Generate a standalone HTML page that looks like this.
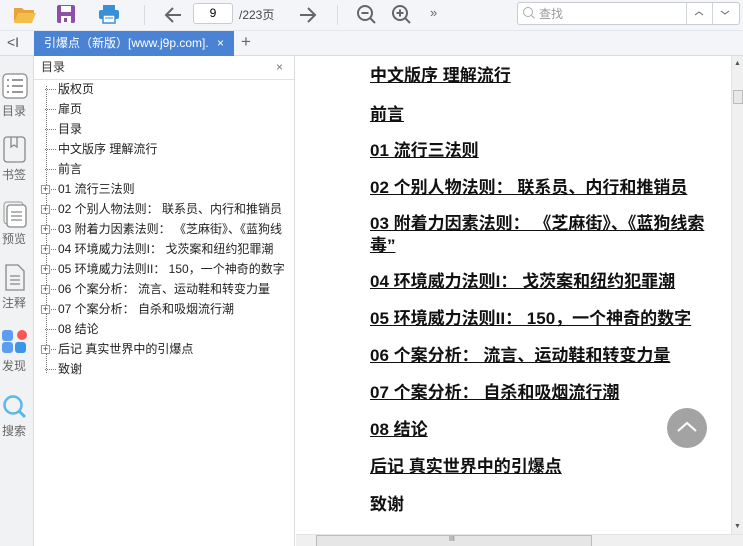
<!DOCTYPE html>
<html><head><meta charset="utf-8"><style>
*{margin:0;padding:0;box-sizing:border-box}
body{width:743px;height:546px;overflow:hidden;position:relative;background:#fff;font-family:"Liberation Sans","Noto Sans CJK SC",sans-serif;}
.a{position:absolute}
#tb{left:0;top:0;width:743px;height:31px;background:#f3f5f8;border-bottom:1px solid #e3e6ea}
#tabs{left:0;top:31px;width:743px;height:25px;background:#f3f5f8;border-bottom:1px solid #d8dbe0}
#strip{left:0;top:56px;width:34px;height:490px;background:#f0f2f4;border-right:1px solid #d8dbe0}
#toc{left:34px;top:56px;width:261px;height:490px;background:#fff;border-right:1px solid #d8dbe0}
.ti{position:absolute;left:24px;font-size:12px;color:#222;white-space:nowrap;line-height:14px}
.ti:before{content:"";position:absolute;left:-13px;top:7px;width:11px;border-top:1px dotted #777}
.pl{position:absolute;left:7px;width:9px;height:9px;border:1px solid #999;background:#fff;font-size:9px;line-height:7px;text-align:center;color:#333}
.h{position:absolute;left:370px;font-size:17px;font-weight:bold;color:#111;text-decoration:underline;white-space:nowrap;line-height:22px}
.lbl{position:absolute;left:0;width:28px;text-align:center;font-size:12px;color:#666}
</style></head><body>
<div id="tb" class="a">
<svg class="a" style="left:13px;top:4px" width="24" height="20"><path d="M1 4h8l2 2h10v3H6L1 18z" fill="#e8a43a"/><path d="M5 9h18l-4 10H1z" fill="#f5bd4c"/></svg>
<svg class="a" style="left:56px;top:4px" width="20" height="20"><rect x="1" y="1" width="18" height="18" rx="2" fill="#8e4fa8"/><rect x="5" y="2" width="10" height="6" fill="#fff"/><rect x="5" y="12" width="10" height="7" fill="#fff"/><rect x="8" y="14" width="3" height="4" fill="#8e4fa8"/></svg>
<svg class="a" style="left:98px;top:4px" width="22" height="20"><rect x="5" y="1" width="12" height="5" fill="#3b8ed8"/><rect x="1" y="6" width="20" height="9" rx="2" fill="#3b8ed8"/><rect x="5" y="11" width="12" height="8" fill="#fff" stroke="#3b8ed8" stroke-width="1.5"/><line x1="7" y1="14" x2="15" y2="14" stroke="#3b8ed8"/></svg>
<div class="a" style="left:144px;top:5px;width:1px;height:20px;background:#d8dbe0"></div>
<svg class="a" style="left:163px;top:5px" width="20" height="20"><path d="M18 10H3M10 3L3 10l7 7" fill="none" stroke="#666" stroke-width="2"/></svg>
<div class="a" style="left:193px;top:3px;width:40px;height:21px;border:1px solid #c8ccd2;border-radius:3px;background:#fff;font-size:12px;text-align:center;line-height:19px">9</div>
<div class="a" style="left:239px;top:6px;font-size:12px;color:#444">/223页</div>
<svg class="a" style="left:298px;top:5px" width="20" height="20"><path d="M2 10h15M10 3l7 7-7 7" fill="none" stroke="#666" stroke-width="2"/></svg>
<div class="a" style="left:337px;top:5px;width:1px;height:20px;background:#d8dbe0"></div>
<svg class="a" style="left:356px;top:4px" width="22" height="22"><circle cx="9" cy="9" r="7" fill="none" stroke="#666" stroke-width="2"/><path d="M14 14l5 5M5.5 9h7" stroke="#666" stroke-width="2"/></svg>
<svg class="a" style="left:391px;top:4px" width="22" height="22"><circle cx="9" cy="9" r="7" fill="none" stroke="#666" stroke-width="2"/><path d="M14 14l5 5M5.5 9h7M9 5.5v7" stroke="#666" stroke-width="2"/></svg>
<div class="a" style="left:430px;top:5px;font-size:13px;color:#666">»</div>
<div class="a" style="left:517px;top:2px;width:223px;height:23px;border:1px solid #c8ccd2;border-radius:3px;background:#fff"></div>
<svg class="a" style="left:522px;top:6px" width="14" height="14"><circle cx="6" cy="6" r="4.5" fill="none" stroke="#aaa"/><path d="M9.5 9.5l3 3" stroke="#aaa"/></svg>
<div class="a" style="left:539px;top:5px;font-size:12px;color:#999">查找</div>
<div class="a" style="left:686px;top:3px;width:1px;height:21px;background:#d0d3d8"></div>
<div class="a" style="left:712px;top:3px;width:1px;height:21px;background:#d0d3d8"></div>
<svg class="a" style="left:694px;top:9px" width="10" height="8"><path d="M1 6l4-3 4 3" fill="none" stroke="#666"/></svg>
<svg class="a" style="left:720px;top:9px" width="10" height="8"><path d="M1 2l4 3 4-3" fill="none" stroke="#666"/></svg>
</div>
<div id="tabs" class="a">
<div class="a" style="left:7px;top:3px;font-size:14px;color:#555">&lt;I</div>
<div class="a" style="left:34px;top:0;width:200px;height:25px;background:#4a82d4;color:#fff;font-size:12px;line-height:25px;padding-left:10px;white-space:nowrap;overflow:hidden">引爆点（新版）[www.j9p.com].<span style="position:absolute;left:183px">×</span></div>
<div class="a" style="left:241px;top:1px;font-size:17px;color:#666">+</div>
</div>
<div id="strip" class="a">
<div class="a" style="left:0;top:15px;width:31px;height:30px;"></div>
<svg class="a" style="left:2px;top:17px" width="26" height="26"><rect x="1" y="1" width="24" height="24" rx="4" fill="#fff" stroke="#888" stroke-width="1.2"/><path d="M5 7h2M10 7h11M5 13h2M10 13h11M5 19h2M10 19h11" stroke="#777" stroke-width="1.6"/></svg>
<div class="lbl" style="top:46px">目录</div>
<svg class="a" style="left:3px;top:80px" width="24" height="28"><rect x="1" y="1" width="21" height="25" rx="3" fill="none" stroke="#888" stroke-width="1.3"/><path d="M8 1v10l3-2 3 2V1" fill="none" stroke="#888" stroke-width="1.3"/></svg>
<div class="lbl" style="top:110px">书签</div>
<svg class="a" style="left:3px;top:145px" width="25" height="27"><rect x="1" y="1" width="19" height="22" rx="3" fill="none" stroke="#999"/><rect x="4" y="4" width="19" height="22" rx="3" fill="#fff" stroke="#888" stroke-width="1.3"/><path d="M8 11h11M8 15h11M8 19h11" stroke="#888" stroke-width="1.3"/></svg>
<div class="lbl" style="top:174px">预览</div>
<svg class="a" style="left:4px;top:208px" width="22" height="28"><path d="M2 1h12l6 6v19H2z" fill="none" stroke="#888" stroke-width="1.3"/><path d="M6 12h10M6 16h10M6 20h10" stroke="#888" stroke-width="1.3"/></svg>
<div class="lbl" style="top:238px">注释</div>
<svg class="a" style="left:2px;top:273px" width="26" height="26"><rect x="0" y="1" width="11" height="11" rx="3" fill="#5b9ef0"/><circle cx="20" cy="6" r="5" fill="#f55"/><rect x="0" y="13" width="11" height="11" rx="3" fill="#5b9ef0"/><rect x="13" y="13" width="11" height="11" rx="3" fill="#3d95e8"/></svg>
<div class="lbl" style="top:301px">发现</div>
<svg class="a" style="left:2px;top:338px" width="26" height="26"><circle cx="11" cy="11" r="8.5" fill="none" stroke="#5bb8e8" stroke-width="2.5"/><path d="M17 17l6 6" stroke="#5bb8e8" stroke-width="3"/></svg>
<div class="lbl" style="top:366px">搜索</div>
</div>
<div id="toc" class="a">
<div class="a" style="left:0;top:0;width:260px;height:24px;border-bottom:1px solid #e0e3e6;font-size:12px;color:#333;line-height:23px;padding-left:7px">目录<span style="position:absolute;left:242px;color:#777">×</span></div>
<div class="a" style="left:12px;top:30px;height:287px;border-left:1px dotted #777"></div>
<div class="ti" style="top:26px">版权页</div>
<div class="ti" style="top:46px">扉页</div>
<div class="ti" style="top:66px">目录</div>
<div class="ti" style="top:86px">中文版序 理解流行</div>
<div class="ti" style="top:106px">前言</div>
<div class="ti" style="top:126px">01 流行三法则</div>
<div class="ti" style="top:146px">02 个别人物法则： 联系员、内行和推销员</div>
<div class="ti" style="top:166px">03 附着力因素法则： 《芝麻街》、《蓝狗线</div>
<div class="ti" style="top:186px">04 环境威力法则I： 戈茨案和纽约犯罪潮</div>
<div class="ti" style="top:206px">05 环境威力法则II： 150，一个神奇的数字</div>
<div class="ti" style="top:226px">06 个案分析： 流言、运动鞋和转变力量</div>
<div class="ti" style="top:246px">07 个案分析： 自杀和吸烟流行潮</div>
<div class="ti" style="top:266px">08 结论</div>
<div class="ti" style="top:286px">后记 真实世界中的引爆点</div>
<div class="ti" style="top:306px">致谢</div>
<div class="pl" style="top:129px">+</div><div class="pl" style="top:149px">+</div><div class="pl" style="top:169px">+</div><div class="pl" style="top:189px">+</div><div class="pl" style="top:209px">+</div><div class="pl" style="top:229px">+</div><div class="pl" style="top:249px">+</div><div class="pl" style="top:289px">+</div>
</div>
<div class="h" style="top:65px">中文版序 理解流行</div>
<div class="h" style="top:104px">前言</div>
<div class="h" style="top:140px">01 流行三法则</div>
<div class="h" style="top:177px">02 个别人物法则： 联系员、内行和推销员</div>
<div class="h" style="top:213px">03 附着力因素法则： 《芝麻街》、《蓝狗线索</div>
<div class="h" style="top:235px">毒”</div>
<div class="h" style="top:271px">04 环境威力法则I： 戈茨案和纽约犯罪潮</div>
<div class="h" style="top:308px">05 环境威力法则II： 150，一个神奇的数字</div>
<div class="h" style="top:345px">06 个案分析： 流言、运动鞋和转变力量</div>
<div class="h" style="top:382px">07 个案分析： 自杀和吸烟流行潮</div>
<div class="h" style="top:419px">08 结论</div>
<div class="h" style="top:456px">后记 真实世界中的引爆点</div>
<div class="h" style="top:494px;text-decoration:none">致谢</div>
<div class="a" style="left:667px;top:408px;width:40px;height:40px;border-radius:50%;background:#a3a3a3"></div>
<svg class="a" style="left:676px;top:420px" width="22" height="14"><path d="M2 11l9-8 9 8" fill="none" stroke="#fff" stroke-width="2"/></svg>
<div class="a" style="left:731px;top:56px;width:12px;height:478px;background:#f0f0f0;border-left:1px solid #e4e4e4"></div>
<div class="a" style="left:733px;top:90px;width:10px;height:14px;background:#e8e8e8;border:1px solid #bbb"></div>
<div class="a" style="left:734px;top:60px;font-size:7px;color:#555">▲</div>
<div class="a" style="left:734px;top:523px;font-size:7px;color:#555">▼</div>
<div class="a" style="left:296px;top:534px;width:447px;height:12px;background:#f0f0f0;border-top:1px solid #e4e4e4"></div>
<div class="a" style="left:316px;top:535px;width:276px;height:11px;background:#e6e6e6;border:1px solid #bbb;border-bottom:none"></div>
<div class="a" style="left:449px;top:536px;font-size:7px;color:#666">III</div>
</body></html>
